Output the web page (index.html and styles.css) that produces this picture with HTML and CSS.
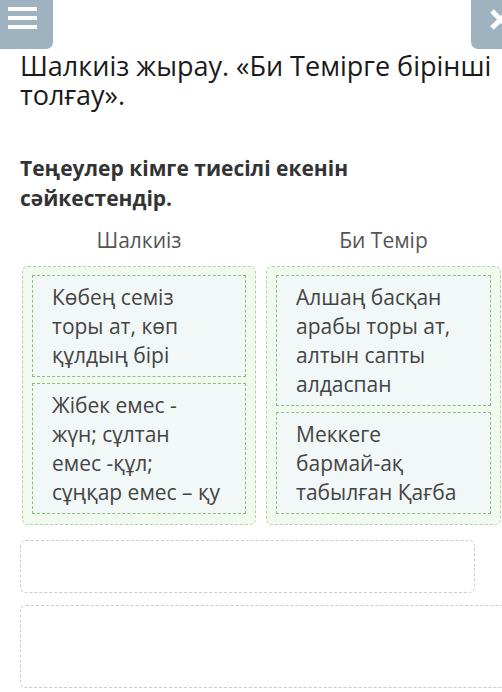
FILE: index.html
```html
<!DOCTYPE html>
<html lang="kk">
<head>
    <meta charset="UTF-8">
    <meta name="viewport" content="width=device-width, initial-scale=1.0">
    <title>Сәйкестендір</title>
    <link rel="stylesheet" href="styles.css">
</head>
<body>
    <!-- Top bar -->
    <div class="toolbar">
        <button class="tool-btn menu-btn" aria-label="Мәзір">
            <svg width="29" height="22" viewBox="0 0 29 22">
                <rect x="0" y="0" width="29" height="4" fill="#fff"/>
                <rect x="0" y="9" width="29" height="4" fill="#fff"/>
                <rect x="0" y="18" width="29" height="4" fill="#fff"/>
            </svg>
        </button>
        <button class="tool-btn close-btn" aria-label="Жабу">
            <svg width="31" height="49" viewBox="0 0 31 49">
                <path d="M21 11 L38 28 M38 11 L21 28" stroke="#fff" stroke-width="5" fill="none"/>
            </svg>
        </button>
    </div>

    <div class="content">
        <h1 class="title">Шалкиіз жырау. «Би Темірге бірінші толғау».</h1>
        <h2 class="task">Теңеулер кімге тиесілі екенін сәйкестендір.</h2>

        <div class="groups">
            <div class="group">
                <div class="group-name">Шалкиіз</div>
                <div class="drop-box">
                    <div class="card">Көбең семіз<br>торы ат, көп<br>құлдың бірі</div>
                    <div class="card">Жібек емес -<br>жүн; сұлтан<br>емес -құл;<br>сұңқар емес – қу</div>
                </div>
            </div>
            <div class="group">
                <div class="group-name">Би Темір</div>
                <div class="drop-box">
                    <div class="card">Алшаң басқан<br>арабы торы ат,<br>алтын сапты<br>алдаспан</div>
                    <div class="card">Меккеге<br>бармай-ақ<br>табылған Қағба</div>
                </div>
            </div>
        </div>

        <!-- empty answer zones -->
        <div class="empty-zone zone-small"></div>
        <div class="empty-zone zone-big"></div>
    </div>
</body>
</html>
```

FILE: styles.css
```css
body {
    margin: 0;
    font-family: "Open Sans", "Noto Sans", sans-serif;
    background-color: #fff;
    color: #222;
    overflow: hidden;
}

.toolbar {
    display: flex;
    justify-content: space-between;
    height: 49px;
}

.tool-btn {
    border: none;
    padding: 0;
    background-color: #9fb2c0;
    display: flex;
    align-items: flex-start;
    height: 49px;
}

.menu-btn {
    width: 53px;
    padding: 7px 0 0 8px;
    border-bottom-right-radius: 7px;
}

.close-btn {
    width: 31px;
    border-bottom-left-radius: 7px;
}

.content {
    padding-left: 20px;
}

.title {
    font-size: 27px;
    font-weight: normal;
    line-height: 29px;
    margin: 2px 0 0 0;
    color: #1a1a1a;
}

.task {
    font-size: 21px;
    font-weight: bold;
    line-height: 30px;
    color: #333;
    margin: 44px 0 0 0;
}

.groups {
    display: grid;
    grid-template-columns: 234px 235px;
    gap: 10px;
    margin-left: 2px;
    margin-top: 13px;
}

.group-name {
    text-align: center;
    font-size: 21px;
    color: #555;
    line-height: 28px;
    margin-bottom: 12px;
}

.drop-box {
    box-sizing: border-box;
    background-color: #f2f9ef;
    border: 1px dashed #abd79d;
    border-radius: 6px;
    padding: 8px 9px;
    display: flex;
    flex-direction: column;
    gap: 6px;
    height: 259px;
}

.card {
    background-color: #f2f7f8;
    border: 1px dashed #88c375;
    padding: 7px 8px 6px 19px;
    font-size: 21px;
    line-height: 29px;
    color: #444;
    white-space: nowrap;
}

.empty-zone {
    box-sizing: border-box;
    border: 1px dashed #c8cccf;
    border-radius: 6px;
}

.zone-small {
    width: 455px;
    height: 53px;
    margin-top: 15px;
}

.zone-big {
    height: 83px;
    margin-top: 12px;
    margin-right: -20px;
}
```
